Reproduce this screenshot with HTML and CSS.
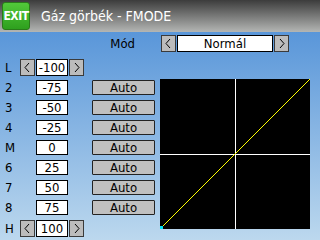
FILE: index.html
```html
<!DOCTYPE html>
<html lang="hu">
<head>
    <meta charset="UTF-8">
    <title>Gáz görbék - FMODE</title>
    <link rel="stylesheet" href="styles.css">
</head>
<body>
    <div class="header">
        <div class="exit">EXIT</div>
        <div class="title">Gáz görbék - FMODE</div>
    </div>
    <div class="page">
        <div class="mode">
            <span class="mode-label">Mód</span>
            <div class="spin">
                <span class="arrow"><svg width="15" height="17"><polyline points="9,4 5,8.5 9,13" /></svg></span>
                <span class="field wide">Normál</span>
                <span class="arrow"><svg width="15" height="17"><polyline points="6,4 10,8.5 6,13" /></svg></span>
            </div>
        </div>
        <div class="main">
            <div class="list">
                <div class="row first">
                    <span class="label">L</span>
                    <div class="spin">
                        <span class="arrow"><svg width="15" height="17"><polyline points="9,4 5,8.5 9,13" /></svg></span>
                        <span class="field">-100</span>
                        <span class="arrow"><svg width="15" height="17"><polyline points="6,4 10,8.5 6,13" /></svg></span>
                    </div>
                </div>
                <div class="row"><span class="label">2</span><span class="value">-75</span><span class="btn">Auto</span></div>
                <div class="row"><span class="label">3</span><span class="value">-50</span><span class="btn">Auto</span></div>
                <div class="row"><span class="label">4</span><span class="value">-25</span><span class="btn">Auto</span></div>
                <div class="row"><span class="label">M</span><span class="value">0</span><span class="btn">Auto</span></div>
                <div class="row"><span class="label">6</span><span class="value">25</span><span class="btn">Auto</span></div>
                <div class="row"><span class="label">7</span><span class="value">50</span><span class="btn">Auto</span></div>
                <div class="row"><span class="label">8</span><span class="value">75</span><span class="btn">Auto</span></div>
                <div class="row last">
                    <span class="label">H</span>
                    <div class="spin">
                        <span class="arrow"><svg width="15" height="17"><polyline points="9,4 5,8.5 9,13" /></svg></span>
                        <span class="field">100</span>
                        <span class="arrow"><svg width="15" height="17"><polyline points="6,4 10,8.5 6,13" /></svg></span>
                    </div>
                </div>
            </div>
            <div class="chart">
                <svg width="150" height="150" shape-rendering="crispEdges">
                    <rect width="150" height="150" fill="#000" />
                    <line x1="75.5" y1="0" x2="75.5" y2="150" stroke="#fff" />
                    <line x1="0" y1="75.5" x2="150" y2="75.5" stroke="#fff" />
                    <line x1="0" y1="150" x2="150" y2="0" stroke="#ffff00" />
                    <rect x="0" y="147" width="3" height="3" fill="#00e0f0" />
                </svg>
            </div>
        </div>
    </div>
</body>
</html>
```

FILE: styles.css
```css
* {
    margin: 0;
    padding: 0;
    box-sizing: border-box;
}

body {
    width: 320px;
    height: 240px;
    overflow: hidden;
    font-family: "DejaVu Sans Condensed", "Liberation Sans Narrow", "Liberation Sans", sans-serif;
    font-size: 13px;
    color: #000;
    background: linear-gradient(#4a8cd6, #bcd8ee);
}

.header {
    height: 32px;
    display: flex;
    align-items: center;
    background: linear-gradient(#3c3c3c, #b4b6b4);
}

.exit {
    width: 28px;
    height: 28px;
    margin-left: 2px;
    border-radius: 3px;
    background: linear-gradient(#52c83a, #2ea01e);
    border: 1px solid #2a7a1a;
    color: #fff;
    font-weight: bold;
    font-size: 12px;
    letter-spacing: -0.5px;
    display: flex;
    align-items: center;
    justify-content: center;
}

.title {
    margin-left: 11px;
    color: #fff;
    font-size: 14px;
}

.mode {
    display: flex;
    align-items: center;
    margin-top: 3px;
    height: 17px;
}

.mode-label {
    width: 161px;
    padding-right: 26px;
    text-align: right;
}

.spin {
    display: flex;
    height: 17px;
}

.arrow {
    width: 15px;
    height: 17px;
    background: #bcbcbc;
    border: 1px solid #3a3a3a;
    display: block;
}

.arrow svg {
    display: block;
    margin: -1px;
}

.arrow polyline {
    fill: none;
    stroke: #000;
    stroke-width: 1;
}

.field {
    width: 32px;
    margin: 0 1px;
    background: #fff;
    border: 1px solid #000;
    text-align: center;
    line-height: 15px;
}

.field.wide {
    width: 96px;
}

.main {
    display: flex;
    margin-top: 5px;
}

.list {
    width: 160px;
}

.row {
    display: flex;
    align-items: center;
    height: 20px;
    padding-top: 1px;
    align-items: flex-start;
}

.row.first {
    height: 22px;
    padding-top: 2px;
}

.row.last {
    padding-top: 1px;
}

.label {
    width: 20px;
    padding-left: 5px;
    line-height: 16px;
}

.row.first .label,
.row.last .label {
    line-height: 17px;
}

.value {
    width: 32px;
    height: 15px;
    margin-left: 16px;
    background: #fff;
    border: 1px solid #000;
    text-align: center;
    line-height: 13px;
}

.btn {
    width: 63px;
    height: 15px;
    margin-left: 24px;
    background: #c0c0c0;
    border: 1px solid #222;
    border-radius: 1px;
    text-align: center;
    line-height: 13px;
}

.chart {
    margin-top: 22px;
    width: 150px;
    height: 150px;
}

.chart svg {
    display: block;
}
```
